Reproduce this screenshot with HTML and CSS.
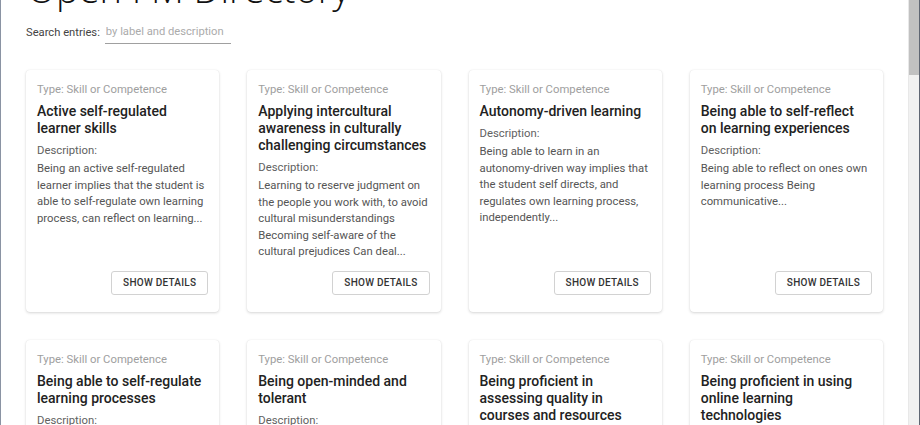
FILE: index.html
```html
<!DOCTYPE html>
<html lang="en">
<head>
<meta charset="utf-8">
<title>Open FM Directory</title>
<link rel="stylesheet" href="styles.css">
</head>
<body>
<div class="frame">
  <main class="page">
    <h1 class="title">Open FM Directory</h1>
    <div class="search">
      <label class="search-label" for="q">Search entries:</label>
      <input class="search-input" id="q" type="text" placeholder="by label and description">
    </div>
    <section class="grid">
      <article class="card">
        <div class="type">Type: Skill or Competence</div>
        <h2 class="name">Active self-regulated learner skills</h2>
        <div class="desc-label">Description:</div>
        <p class="desc">Being an active self-regulated learner implies that the student is able to self-regulate own learning process, can reflect on learning...</p>
        <div class="actions"><button class="btn">SHOW DETAILS</button></div>
      </article>
      <article class="card">
        <div class="type">Type: Skill or Competence</div>
        <h2 class="name">Applying intercultural awareness in culturally challenging circumstances</h2>
        <div class="desc-label">Description:</div>
        <p class="desc">Learning to reserve judgment on the people you work with, to avoid cultural misunderstandings Becoming self-aware of the cultural prejudices Can deal...</p>
        <div class="actions"><button class="btn">SHOW DETAILS</button></div>
      </article>
      <article class="card">
        <div class="type">Type: Skill or Competence</div>
        <h2 class="name">Autonomy-driven learning</h2>
        <div class="desc-label">Description:</div>
        <p class="desc">Being able to learn in an autonomy-driven way implies that the student self directs, and regulates own learning process, independently...</p>
        <div class="actions"><button class="btn">SHOW DETAILS</button></div>
      </article>
      <article class="card">
        <div class="type">Type: Skill or Competence</div>
        <h2 class="name">Being able to self-reflect on learning experiences</h2>
        <div class="desc-label">Description:</div>
        <p class="desc">Being able to reflect on ones own learning process Being communicative...</p>
        <div class="actions"><button class="btn">SHOW DETAILS</button></div>
      </article>
      <article class="card">
        <div class="type">Type: Skill or Competence</div>
        <h2 class="name">Being able to self-regulate learning processes</h2>
        <div class="desc-label">Description:</div>
        <p class="desc">Being able to plan, monitor and evaluate own learning process and adapt learning strategies accordingly...</p>
        <div class="actions"><button class="btn">SHOW DETAILS</button></div>
      </article>
      <article class="card">
        <div class="type">Type: Skill or Competence</div>
        <h2 class="name">Being open-minded and tolerant</h2>
        <div class="desc-label">Description:</div>
        <p class="desc">Being open to new ideas, people and cultures and accepting different points of view...</p>
        <div class="actions"><button class="btn">SHOW DETAILS</button></div>
      </article>
      <article class="card">
        <div class="type">Type: Skill or Competence</div>
        <h2 class="name">Being proficient in assessing quality in courses and resources for&nbsp;online learning</h2>
        <div class="desc-label">Description:</div>
        <p class="desc">Being able to judge the quality of online courses and learning resources...</p>
        <div class="actions"><button class="btn">SHOW DETAILS</button></div>
      </article>
      <article class="card">
        <div class="type">Type: Skill or Competence</div>
        <h2 class="name">Being proficient in using online learning technologies</h2>
        <div class="desc-label">Description:</div>
        <p class="desc">Being able to use online learning platforms and tools effectively...</p>
        <div class="actions"><button class="btn">SHOW DETAILS</button></div>
      </article>
    </section>
  </main>
  <div class="scrollbar" aria-hidden="true"><div class="thumb"></div></div>
</div>
</body>
</html>
```

FILE: styles.css
```css
* { box-sizing: border-box; }

html, body {
  margin: 0;
  padding: 0;
  height: 100%;
  background: #ffffff;
}

body {
  font-family: Roboto, "Liberation Sans", Arial, sans-serif;
  color: #333333;
  overflow: hidden;
}

.frame {
  height: 100vh;
  display: flex;
  border-left: 1px solid #8a93a3;
  border-right: 1px solid #5f6673;
  background: #ffffff;
}

.page {
  flex: 1;
  min-width: 0;
  overflow: hidden;
  padding: 0 25px;
}

.scrollbar {
  width: 11px;
  flex: none;
  background: #f1f1f1;
  border-left: 1px solid #e8e8e8;
}

.thumb {
  height: 75px;
  background: #c1c1c1;
}

.title {
  font-family: "Open Sans", "DejaVu Sans", sans-serif;
  font-weight: 300;
  font-size: 38px;
  line-height: 44px;
  margin: -34px 0 10px;
  color: #111111;
  padding-left: 1px;
}

.search {
  display: flex;
  align-items: center;
  height: 24px;
  gap: 5px;
}

.search-label {
  font-size: 11.2px;
  color: #444444;
}

.search-input {
  width: 126px;
  height: 24px;
  border: none;
  border-bottom: 1px solid #a0a0a0;
  padding: 0 1px;
  font-family: Roboto, "Liberation Sans", Arial, sans-serif;
  font-size: 11.2px;
  color: #333333;
  outline: none;
  background: transparent;
}

.search-input::placeholder {
  color: #ababab;
}

.grid {
  margin-top: 26px;
  display: grid;
  grid-template-columns: repeat(4, 1fr);
  column-gap: 28px;
  row-gap: 28px;
}

.card {
  background: #ffffff;
  border-radius: 4px;
  box-shadow: 0 1px 3px rgba(0, 0, 0, 0.16), 0 0 1px rgba(0, 0, 0, 0.10);
  padding: 12px 11px 17px;
  display: flex;
  flex-direction: column;
}

.type {
  font-size: 11.3px;
  line-height: 16px;
  color: #9e9e9e;
}

.name {
  margin: 5px 0 6px;
  font-size: 14px;
  line-height: 17px;
  font-weight: 500;
  color: #222222;
}

.desc-label {
  font-size: 11.3px;
  line-height: 16px;
  color: #616161;
}

.desc {
  margin: 2px 0 0;
  font-size: 11.3px;
  line-height: 16.6px;
  color: #555555;
}

.actions {
  margin-top: auto;
  padding-top: 10px;
  display: flex;
  justify-content: flex-end;
}

.btn {
  height: 24px;
  padding: 0 11px;
  border: 1px solid #d2d2d2;
  border-radius: 3px;
  background: #ffffff;
  font-family: Roboto, "Liberation Sans", Arial, sans-serif;
  font-size: 10px;
  font-weight: 500;
  letter-spacing: 0.25px;
  color: #333333;
}
```
